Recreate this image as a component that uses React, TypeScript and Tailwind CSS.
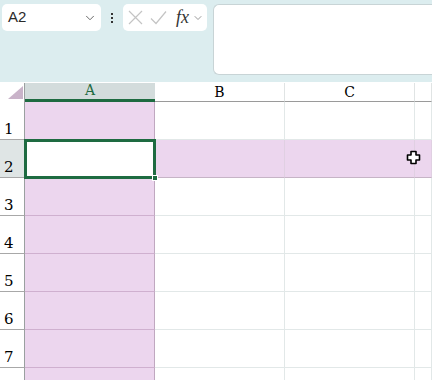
import { ChevronDown } from "lucide-react";

const rows = [1, 2, 3, 4, 5, 6, 7, 8];
const cols = ["A", "B", "C", ""];

function Corner() {
  return (
    <div className="relative h-full border-r border-[#9aa0a0] bg-white">
      <svg className="absolute left-[8px] top-[3px]" width="15" height="13" viewBox="0 0 15 13">
        <polygon points="15,0 15,13 0,13" fill="#c9b3c9" />
      </svg>
    </div>
  );
}

function ColHeader({ label }: { label: string }) {
  const active = label === "A";
  return (
    <div
      className={
        active
          ? "flex h-full items-end justify-center border-b-[3px] border-[#1e6b41] bg-[#d3dcdc] text-[#1e6b41]"
          : "flex h-full items-end justify-center border-b border-r border-[#9a9a9a] border-r-[#e0e4e4] bg-white text-black"
      }
    >
      <span className="font-['DejaVu_Serif',serif] text-[14px] leading-none pb-[2px]">{label}</span>
    </div>
  );
}

function RowHeader({ n }: { n: number }) {
  return (
    <div
      className={
        "flex h-full items-end border-b border-r border-[#a8a8a8] border-r-[#9aa0a0] pl-[4px] pb-[2px] " +
        (n === 2 ? "bg-[#dfe5e5]" : "bg-white")
      }
    >
      {n < 8 && <span className="font-['DejaVu_Serif',serif] text-[15px] leading-none">{n}</span>}
    </div>
  );
}

function Cell({ row, col }: { row: number; col: string }) {
  if (col === "A" && row === 2) {
    return (
      <div className="relative -ml-px -mt-px h-[calc(100%+2px)] w-[calc(100%+2px)] border-[3px] border-[#1e6b41] bg-white">
        <div className="absolute -bottom-[5px] -right-[5px] h-[6px] w-[6px] border border-white bg-[#1e6b41]" />
      </div>
    );
  }
  if (col === "A") {
    return <div className="h-full border-b border-r border-[#cfb0cf] border-r-[#c0a8c0] bg-[#ecd6ee]" />;
  }
  if (row === 2) {
    return <div className="h-full border-b border-r border-[#c6b4c6] border-r-[#e0d0e2] bg-[#ecd6ee]" />;
  }
  return <div className="h-full border-b border-r border-[#e2e8e8] bg-white" />;
}

function Cursor() {
  return (
    <svg className="absolute left-[406px] top-[150px]" width="15" height="15" viewBox="0 0 15 15">
      <path
        d="M5 1.5h5v3.5h3.5v5h-3.5v3.5h-5v-3.5h-3.5v-5h3.5z"
        fill="white"
        stroke="black"
        strokeWidth="1.6"
        strokeLinejoin="round"
      />
    </svg>
  );
}

export default function App() {
  return (
    <div className="relative h-[380px] w-[432px] overflow-hidden bg-white font-['Liberation_Sans',sans-serif]">
      {/* Formula bar area */}
      <div className="flex h-[82px] items-start bg-[#dcedef] pl-[2px] pt-[4px]">
        <div className="flex h-[27px] w-[99px] items-center justify-between rounded-[5px] bg-white pl-[6px] pr-[4px]">
          <span className="text-[15px] text-[#2a2a2a]">A2</span>
          <ChevronDown size={14} strokeWidth={1.5} className="text-[#555]" />
        </div>
        <div className="ml-[9px] flex h-[27px] w-[4px] flex-col items-center justify-center gap-[2px]">
          <span className="h-[2px] w-[2px] bg-[#333]" />
          <span className="h-[2px] w-[2px] bg-[#333]" />
          <span className="h-[2px] w-[2px] bg-[#333]" />
        </div>
        <div className="ml-[9px] flex h-[27px] w-[84px] items-center rounded-[5px] bg-white pl-[5px]">
          <svg width="15" height="15" viewBox="0 0 15 15">
            <path d="M1 1L14 14M14 1L1 14" stroke="#c4c4c4" strokeWidth="1.2" fill="none" />
          </svg>
          <svg className="ml-[7px]" width="17" height="15" viewBox="0 0 17 15">
            <path d="M1 8.5L6 13.5L16 1.5" stroke="#c4c4c4" strokeWidth="1.2" fill="none" />
          </svg>
          <span className="ml-[9px] font-['Liberation_Serif',serif] text-[18px] italic text-[#333]">fx</span>
          <ChevronDown size={12} strokeWidth={1.5} className="ml-[3px] text-[#777]" />
        </div>
        <div className="ml-[6px] h-[71px] flex-1 rounded-l-[6px] border border-r-0 border-[#c8d4d6] bg-white" />
      </div>
      <div className="h-px bg-white" />
      {/* Grid */}
      <div className="grid grid-cols-[25px_130px_130px_130px_1fr] grid-rows-[19px_38px_38px_38px_38px_38px_38px_38px_38px]">
        <Corner />
        {cols.map((c) => (
          <ColHeader key={"h" + c} label={c} />
        ))}
        {rows.map((r) => (
          <div key={r} className="contents">
            <RowHeader n={r} />
            {cols.map((c) => (
              <Cell key={c} row={r} col={c} />
            ))}
          </div>
        ))}
      </div>
      <Cursor />
    </div>
  );
}
